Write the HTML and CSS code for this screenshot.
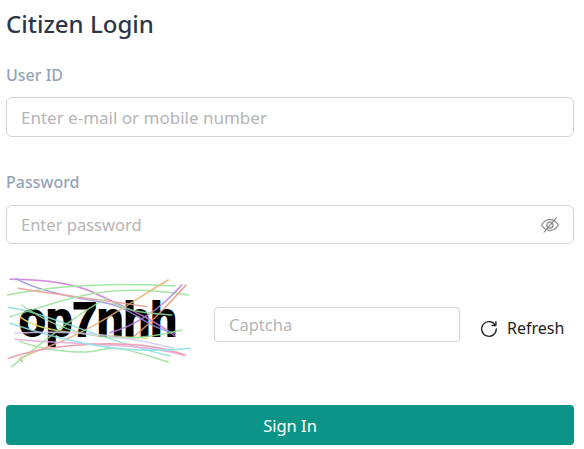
FILE: index.html
```html
<!DOCTYPE html>
<html lang="en">
<head>
<meta charset="utf-8">
<title>Citizen Login</title>
<link rel="stylesheet" href="styles.css">
</head>
<body>
<form class="login">
  <h1 class="title">Citizen Login</h1>
  <div class="field field-user">
    <label class="label">User ID</label>
    <div class="input-box"><span class="placeholder placeholder-wide">Enter e-mail or mobile number</span></div>
  </div>
  <div class="field field-pass">
    <label class="label">Password</label>
    <div class="input-box input-pass">
      <span class="placeholder">Enter password</span>
      <svg class="eye" viewBox="0 0 24 24" width="20" height="20" fill="none" stroke="#8a8a8a" stroke-width="1.5" stroke-linecap="round" stroke-linejoin="round">
        <path d="M2 12c2.500-4.400 6-6.500 10-6.500s7.500 2.100 10 6.500c-2.500 4.400-6 6.500-10 6.500S4.500 16.400 2 12z"/>
        <circle cx="12" cy="12" r="3.600"/>
        <path d="M5 20.500 19.500 3.500"/>
      </svg>
    </div>
  </div>
  <div class="captcha-row">
    <svg class="captcha" viewBox="18 18 570 276" width="190" height="92" fill="none" stroke-linecap="round">
      <text class="captcha-text" x="57" y="198" textLength="474" lengthAdjust="spacingAndGlyphs">op7nhh</text>
      <g stroke-width="4.500" opacity="0.85">
        <path stroke="#cf6fd8" d="M30 28C120 28 220 38 290 72S450 140 525 198"/>
        <path stroke="#8f8fe8" d="M48 26C100 55 200 80 300 95S430 170 525 190"/>
        <path stroke="#96e296" d="M22 75C150 50 300 35 525 48"/>
        <path stroke="#e89a90" d="M55 55C150 72 300 88 440 110"/>
        <path stroke="#96e296" d="M30 140C170 100 300 30 565 75"/>
        <path stroke="#e8b070" d="M505 30C400 90 300 170 150 228S80 260 65 275"/>
        <path stroke="#b57ae8" d="M545 45C480 120 400 170 330 188"/>
        <path stroke="#e8907a" d="M558 45C500 110 440 170 395 205"/>
        <path stroke="#80e0d8" d="M25 112C150 130 300 210 510 258"/>
        <path stroke="#e0e070" d="M60 140C120 190 250 190 440 205"/>
        <path stroke="#e8a0dc" d="M45 208C200 225 400 215 550 255"/>
        <path stroke="#96e296" d="M60 215C130 240 240 255 300 240S420 250 505 276"/>
        <path stroke="#96e296" d="M35 290C100 240 230 130 320 85"/>
        <path stroke="#96e296" d="M65 105C200 200 350 230 545 180"/>
        <path stroke="#e890a4" d="M25 265C150 220 400 200 555 255"/>
        <path stroke="#80e0e8" d="M30 160C150 200 350 260 570 235"/>
        <path stroke="#d8c8f0" d="M45 190C200 180 350 190 520 235"/>
        <path stroke="#96e296" d="M340 100C400 130 460 130 515 135"/>
      </g>
    </svg>
    <div class="input-box input-captcha"><span class="placeholder">Captcha</span></div>
    <button class="refresh" type="button">
      <svg viewBox="0 0 24 24" width="20" height="20" fill="none" stroke="#222" stroke-width="1.600" stroke-linecap="round" stroke-linejoin="round">
        <path d="M19.500 8.500A8.800 8.800 0 1 0 20.800 13"/>
        <path d="M20.300 4.300V9H15.600"/>
      </svg>
      <span>Refresh</span>
    </button>
  </div>
  <button class="submit" type="button">Sign In</button>
</form>
</body>
</html>
```
FILE: styles.css
```css
* { box-sizing: border-box; }
html, body { margin: 0; padding: 0; background: #fff; }
body { font-family: "Noto Sans", "Open Sans", sans-serif; }
.login { padding: 9px 10px 0 6px; display: flex; flex-direction: column; }
.title { margin: 0; font-size: 24px; line-height: 30px; font-weight: 500; color: #2d3748; }
.field { display: flex; flex-direction: column; }
.field-user { margin-top: 25px; }
.field-pass { margin-top: 34px; }
.label { font-size: 16px; line-height: 22px; font-weight: 500; color: #94a3b8; margin-bottom: 11px; }
.field-pass .label { margin-bottom: 12px; }
.input-box { height: 40px; border: 1px solid #d4d4d4; border-radius: 6px; padding: 0 14px; display: flex; align-items: center; justify-content: space-between; background: #fff; }
.input-pass { height: 39px; padding-right: 13px; }
.placeholder { font-size: 16.500px; color: #b5b5b5; }
.placeholder-wide { font-size: 17px; }
.captcha-row { display: flex; align-items: flex-start; margin-top: 32px; }
.captcha { flex: none; }
.captcha-text { font-family: "Liberation Sans", sans-serif; font-weight: 700; font-size: 146px; fill: #000; stroke: #000; stroke-width: 6px; }
.input-captcha { width: 246px; height: 35px; margin-left: 18px; margin-top: 31px; border-radius: 4px; }
.refresh { display: flex; align-items: center; gap: 8px; margin-left: 19px; margin-top: 41px; padding: 0; border: 0; background: none; font: inherit; font-size: 16px; color: #222; }
.submit { margin-top: 37px; height: 40px; border: 0; border-radius: 4px; background: #0d9488; color: #fff; font: inherit; font-size: 16.500px; }
```
